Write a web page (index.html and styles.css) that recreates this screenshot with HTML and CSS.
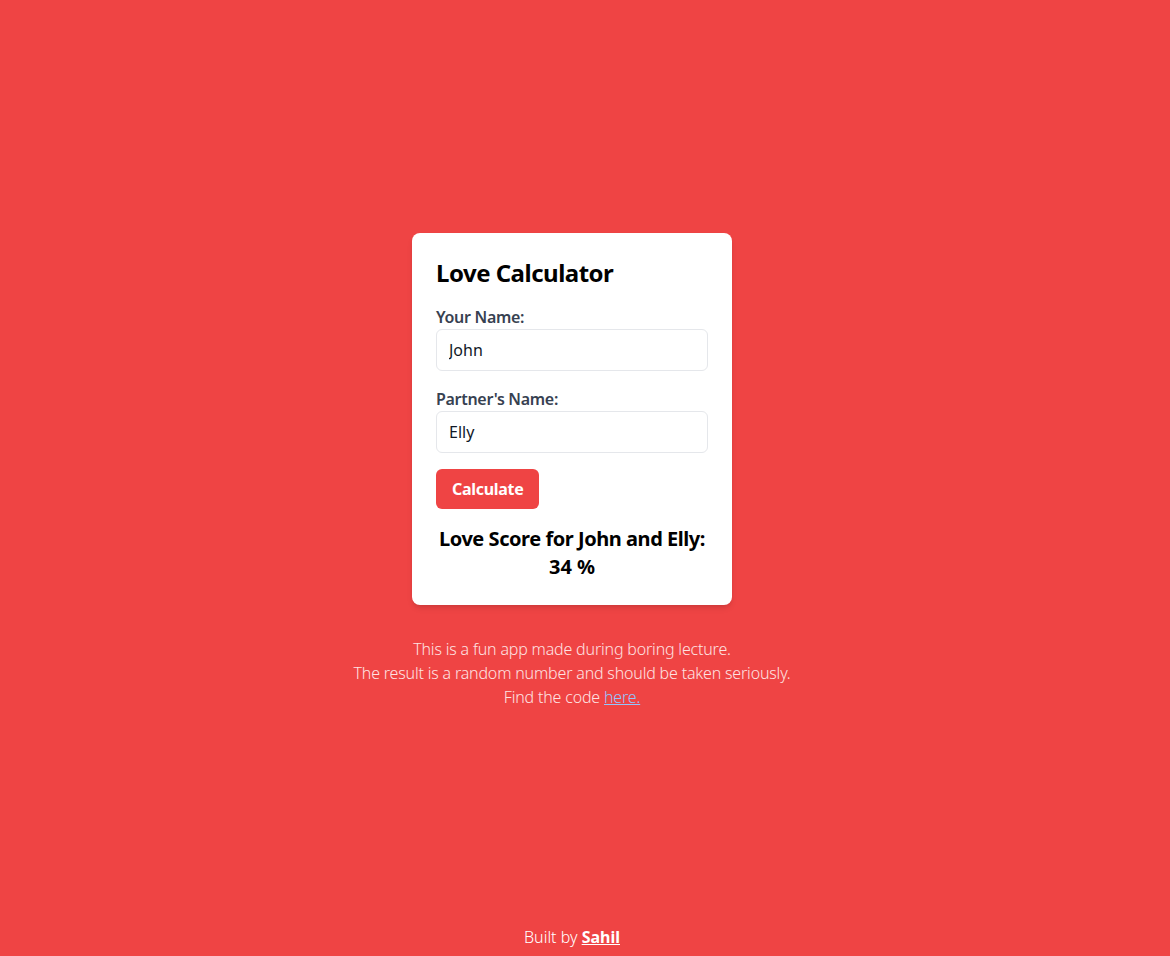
FILE: index.html
```html
<!DOCTYPE html>
<html lang="en">
<head>
<meta charset="utf-8">
<title>Love Calculator</title>
<link rel="stylesheet" href="styles.css">
</head>
<body>
<main class="main">
  <div class="card">
    <h1 class="title">Love Calculator</h1>
    <div class="field">
      <label class="label" for="n1">Your Name:</label>
      <input class="input" id="n1" type="text" value="John">
    </div>
    <div class="field">
      <label class="label" for="n2">Partner's Name:</label>
      <input class="input" id="n2" type="text" value="Elly">
    </div>
    <button class="btn" type="button">Calculate</button>
    <div class="result">
      <div class="result-line">Love Score for John and Elly:</div>
      <div>34 %</div>
    </div>
  </div>
  <p class="note">This is a fun app made during boring lecture.<br>The result is a random number and should be taken seriously.<br>Find the code <a href="#" class="link">here.</a></p>
</main>
<footer class="footer">Built by <a href="#" class="author">Sahil</a></footer>
</body>
</html>
```
FILE: styles.css
```css
* { box-sizing: border-box; }
html, body { margin: 0; padding: 0; }
body {
  background: #ef4444;
  font-family: "Noto Sans", "DejaVu Sans", sans-serif;
  min-height: 100vh;
  display: flex;
  flex-direction: column;
  padding-right: 26px;
}
.main {
  flex: 1;
  display: flex;
  flex-direction: column;
  align-items: center;
  justify-content: center;
  padding-top: 17px;
}
.card {
  width: 320px;
  background: #fff;
  border-radius: 8px;
  padding: 24px;
  box-shadow: 0 4px 6px -1px rgba(0,0,0,0.1), 0 2px 4px -2px rgba(0,0,0,0.1);
}
.title {
  margin: 0 0 16px;
  font-size: 24px;
  line-height: 32px;
  font-weight: 700;
  letter-spacing: -0.5px;
  color: #000;
}
.field { margin-bottom: 16px; }
.label {
  display: block;
  font-size: 16px;
  line-height: 24px;
  font-weight: 600;
  letter-spacing: -0.3px;
  color: #374151;
}
.input {
  display: block;
  width: 100%;
  height: 42px;
  padding: 8px 12px;
  border: 1px solid #e5e7eb;
  border-radius: 6px;
  font-family: inherit;
  font-size: 16px;
  line-height: 24px;
  color: #111827;
  outline: none;
}
.btn {
  display: block;
  height: 40px;
  padding: 8px 16px;
  border: 0;
  border-radius: 6px;
  background: #ef4444;
  color: #fff;
  font-family: inherit;
  font-size: 16px;
  line-height: 24px;
  font-weight: 700;
  letter-spacing: -0.3px;
}
.result {
  margin-top: 16px;
  text-align: center;
  font-size: 20px;
  line-height: 28px;
  font-weight: 700;
  color: #000;
}
.result-line {
  white-space: nowrap;
  letter-spacing: -0.45px;
}
.note {
  margin: 32px 0 0;
  text-align: center;
  font-size: 16px;
  line-height: 24px;
  font-weight: 300;
  letter-spacing: -0.18px;
  color: #fee2e2;
}
.link { color: #93c5fd; text-decoration: underline; }
.footer {
  height: 31px;
  text-align: center;
  font-size: 16px;
  line-height: 24px;
  font-weight: 300;
  color: #fff;
}
.author { color: #fff; font-weight: 700; text-decoration: underline; }
```
